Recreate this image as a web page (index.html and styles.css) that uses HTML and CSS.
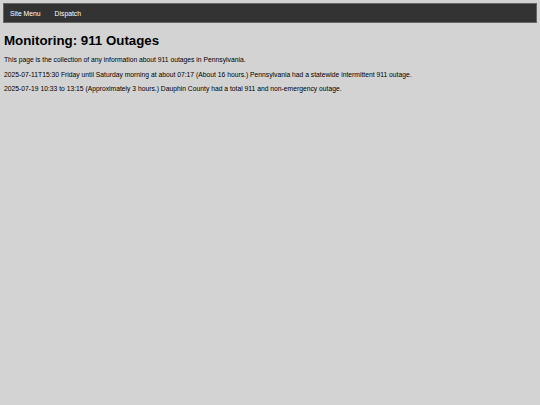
FILE: index.html
```html
<!DOCTYPE html>
<html lang="en">
<head>
<meta charset="utf-8">
<title>Monitoring: 911 Outages</title>
<link rel="stylesheet" href="styles.css">
</head>
<body>
<nav class="topnav">
  <a class="navlink" href="#">Site Menu</a>
  <a class="navlink" href="#">Dispatch</a>
</nav>
<main class="content">
  <h1 class="title">Monitoring: 911 Outages</h1>
  <p class="para">This page is the collection of any information about 911 outages in Pennsylvania.</p>
  <p class="para">2025-07-11T15:30 Friday until Saturday morning at about 07:17 (About 16 hours.) Pennsylvania had a statewide intermittent 911 outage.</p>
  <p class="para">2025-07-19 10:33 to 13:15 (Approximately 3 hours.) Dauphin County had a total 911 and non-emergency outage.</p>
</main>
</body>
</html>
```
FILE: styles.css
```css
html, body {
  margin: 0;
  padding: 0;
  background: #d3d3d3;
}
body {
  padding: 3px;
  font-family: "Liberation Sans", Arial, sans-serif;
  color: #000;
}
.topnav {
  display: flex;
  align-items: center;
  height: 18px;
  background: #333;
  border: 1px solid #666;
  padding: 0 6px;
  gap: 14px;
}
.navlink {
  color: #fff;
  text-decoration: none;
  font-size: 6.8px;
}
.content {
  padding: 0 1px;
}
.title {
  font-size: 13.3px;
  font-weight: bold;
  margin: 10px 0 7px;
  line-height: 16px;
}
.para {
  font-size: 6.75px;
  line-height: 8px;
  margin: 0 0 6.5px;
}
```
